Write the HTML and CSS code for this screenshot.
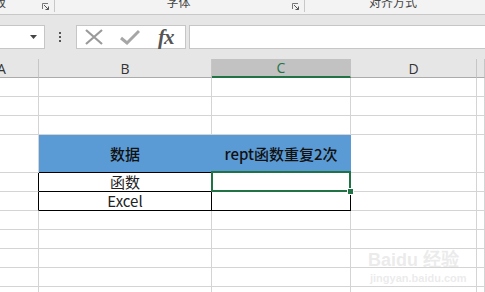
FILE: index.html
```html
<!DOCTYPE html>
<html lang="zh-CN">
<head>
  <meta charset="UTF-8">
  <meta name="viewport" content="width=device-width, initial-scale=1.0">
  <title>rept函数</title>
  <link rel="stylesheet" href="styles.css">
</head>
<body>

  <div class="ribbon">
    <div class="group group-clip">
      <span class="group-label">剪贴板</span>
      <svg class="launcher" width="7" height="7" viewBox="0 0 7 7"><path d="M0.5 6V0.5H6" fill="none" stroke="#777"/><path d="M2 2L6.5 6.5M6.5 3.5V6.5H3.5" fill="none" stroke="#555"/></svg>
    </div>
    <div class="group group-font">
      <span class="group-label">字体</span>
      <svg class="launcher" width="7" height="7" viewBox="0 0 7 7"><path d="M0.5 6V0.5H6" fill="none" stroke="#777"/><path d="M2 2L6.5 6.5M6.5 3.5V6.5H3.5" fill="none" stroke="#555"/></svg>
    </div>
    <div class="group group-align">
      <span class="group-label">对齐方式</span>
    </div>
  </div>

  <div class="formula-bar">
    <div class="name-box">
      <svg width="7" height="4" viewBox="0 0 7 4"><path d="M0 0H7L3.5 4Z" fill="#444"/></svg>
    </div>
    <div class="dots"><i></i><i></i><i></i></div>
    <div class="fx-buttons">
      <svg width="18" height="16" viewBox="0 0 18 16"><path d="M1 1L17 15M17 1L1 15" stroke="#9a9a9a" stroke-width="2.2" fill="none"/></svg>
      <svg width="20" height="16" viewBox="0 0 20 16"><path d="M1 9L7 14L19 2" stroke="#a6a6a6" stroke-width="3" fill="none"/></svg>
      <span class="fx">fx</span>
    </div>
    <div class="formula-input"></div>
  </div>

  <div class="sheet">
    <div class="col-head">A</div>
    <div class="col-head">B</div>
    <div class="col-head col-active">C</div>
    <div class="col-head">D</div>
    <div class="col-head"></div>

    <div class="cell"></div><div class="cell"></div><div class="cell"></div><div class="cell"></div><div class="cell"></div>
    <div class="cell"></div><div class="cell"></div><div class="cell"></div><div class="cell"></div><div class="cell"></div>
    <div class="cell"></div><div class="cell"></div><div class="cell"></div><div class="cell"></div><div class="cell"></div>

    <div class="cell tall"></div>
    <div class="cell tall title title-b">数据</div>
    <div class="cell tall title">rept函数重复2次</div>
    <div class="cell tall"></div>
    <div class="cell tall"></div>

    <div class="cell edge-left"></div>
    <div class="cell boxed">函数</div>
    <div class="cell boxed selected"><span class="handle"></span></div>
    <div class="cell"></div><div class="cell"></div>

    <div class="cell edge-left"></div>
    <div class="cell boxed boxed-last">Excel</div>
    <div class="cell boxed boxed-last"></div>
    <div class="cell"></div><div class="cell"></div>

    <div class="cell"></div><div class="cell"></div><div class="cell"></div><div class="cell"></div><div class="cell"></div>
    <div class="cell"></div><div class="cell"></div><div class="cell"></div><div class="cell"></div><div class="cell"></div>
    <div class="cell"></div><div class="cell"></div><div class="cell"></div><div class="cell"></div><div class="cell"></div>
    <div class="cell"></div><div class="cell"></div><div class="cell"></div><div class="cell"></div><div class="cell"></div>
    <div class="cell"></div><div class="cell"></div><div class="cell"></div><div class="cell"></div><div class="cell"></div>
    <div class="cell"></div><div class="cell"></div><div class="cell"></div><div class="cell"></div><div class="cell"></div>
  </div>

  <div class="watermark">
    <div class="wm-logo">Bai<span>du</span> 经验</div>
    <div class="wm-url">jingyan.baidu.com</div>
  </div>

</body>
</html>
```

FILE: styles.css
```css
body {
  margin: 0;
  width: 485px;
  height: 292px;
  overflow: hidden;
  position: relative;
  background: #fff;
  font-family: "Noto Sans CJK SC", "Noto Sans", sans-serif;
  color: #222;
}

/* ribbon group labels, cut at the top */
.ribbon {
  display: flex;
  height: 14px;
  background: #f3f3f3;
  border-bottom: 1px solid #c8c8c8;
  overflow: hidden;
}

.group {
  position: relative;
  display: flex;
  justify-content: center;
  border-right: 1px solid #c8c8c8;
  height: 12px;
  overflow: hidden;
}

.group-label {
  font-size: 12px;
  line-height: 12px;
  margin-top: -4px;
  color: #444;
  white-space: nowrap;
}

.group-clip {
  width: 54px;
  justify-content: flex-start;
}

.group-clip .group-label {
  margin-left: -30px;
}

.group-font {
  width: 249px;
}

.group-font .group-label {
  margin-left: -2px;
}

.group-align {
  flex: 1;
  border-right: none;
}

.group-align .group-label {
  margin-left: -4px;
}

.launcher {
  position: absolute;
  right: 5px;
  top: 3px;
}

/* formula bar */
.formula-bar {
  display: flex;
  align-items: flex-start;
  height: 44px;
  padding-top: 10px;
  box-sizing: border-box;
  background: #e6e6e6;
  overflow: hidden;
}

.name-box {
  width: 45px;
  height: 24px;
  box-sizing: border-box;
  background: #fff;
  border: 1px solid #c6c6c6;
  border-left: none;
  display: flex;
  align-items: center;
  justify-content: flex-end;
  padding-right: 7px;
}

.dots {
  width: 3px;
  margin: 7px 14px 0 14px;
  display: flex;
  flex-direction: column;
  gap: 2px;
}

.dots i {
  width: 2px;
  height: 2px;
  background: #555;
}

.fx-buttons {
  width: 110px;
  height: 24px;
  box-sizing: border-box;
  background: #fff;
  border: 1px solid #c6c6c6;
  display: flex;
  align-items: center;
  padding-left: 8px;
  gap: 17px;
}

.fx {
  font-family: "Liberation Serif", "DejaVu Serif", serif;
  font-style: italic;
  font-weight: bold;
  font-size: 21px;
  line-height: 20px;
  color: #555;
  margin-left: 1px;
  letter-spacing: -1px;
}

.formula-input {
  flex: 1;
  height: 24px;
  margin-left: 3px;
  box-sizing: border-box;
  background: #fff;
  border: 1px solid #c6c6c6;
  border-right: none;
}

/* worksheet grid */
.sheet {
  display: grid;
  grid-template-columns: 39px 173px 139px 126px 8px;
  grid-auto-rows: 19px;
  height: 233px;
  overflow: hidden;
}

.col-head {
  height: 19px;
  box-sizing: border-box;
  background: #e6e6e6;
  border-right: 1px solid #c6c6c6;
  border-bottom: 1px solid #ababab;
  font-family: "Open Sans", "Liberation Sans", sans-serif;
  font-size: 14px;
  line-height: 19px;
  text-align: center;
  color: #333;
  overflow: hidden;
}

.col-head:first-child {
  text-align: left;
  text-indent: -3px;
}

.col-active {
  background: #c2c2c2;
  color: #217346;
  border-bottom: 2px solid #217346;
  border-right-color: #c2c2c2;
  line-height: 18px;
}

.cell {
  box-sizing: border-box;
  border-right: 1px solid #d4d4d4;
  border-bottom: 1px solid #d4d4d4;
  font-size: 15px;
  line-height: 18px;
  text-align: center;
  color: #222;
}

.tall {
  grid-row: span 2;
}

.title {
  background: #5b9bd5;
  border-bottom-color: #000;
  border-right-color: #5b9bd5;
  line-height: 38px;
  font-size: 15px;
  font-weight: 500;
  color: #111;
}

.edge-left {
  border-right-color: #000;
}

.boxed {
  border-right-color: #000;
  border-bottom-color: #000;
}

.selected {
  position: relative;
}

.selected::after {
  content: "";
  position: absolute;
  left: -1px;
  top: -2px;
  right: -1px;
  bottom: -1px;
  border: 2px solid #217346;
}

.handle {
  position: absolute;
  right: -4px;
  bottom: -4px;
  width: 5px;
  height: 5px;
  background: #217346;
  border: 1px solid #fff;
  z-index: 1;
}

/* faint site watermark */
.watermark {
  position: absolute;
  left: 368px;
  top: 250px;
  color: rgba(215, 215, 215, 0.5);
  font-family: "Liberation Sans", sans-serif;
  font-weight: bold;
}

.wm-logo {
  font-size: 18px;
  line-height: 20px;
}

.wm-url {
  font-size: 11px;
  line-height: 12px;
  margin-top: 2px;
  margin-left: 2px;
}
```
